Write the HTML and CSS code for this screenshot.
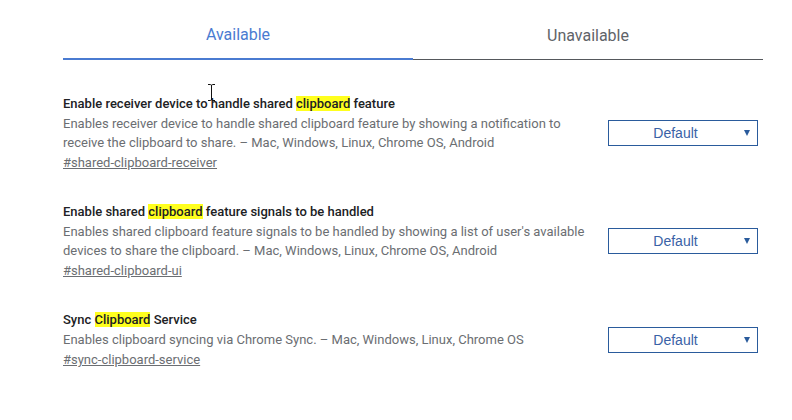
FILE: index.html
```html
<!DOCTYPE html>
<html lang="en">
<head>
<meta charset="utf-8">
<title>Flags</title>
<link rel="stylesheet" href="styles.css">
</head>
<body>
<div class="page">
  <div class="tabs">
    <div class="tab tab-active">Available</div>
    <div class="tab">Unavailable</div>
  </div>

  <div class="list">
    <div class="row">
      <div class="info">
        <h3 class="name">Enable receiver device to handle shared <mark class="hl">clipboard</mark> feature</h3>
        <p class="desc">Enables receiver device to handle shared clipboard feature by showing a notification to receive the clipboard to share. – Mac, Windows, Linux, Chrome OS, Android</p>
        <a class="link" href="#shared-clipboard-receiver">#shared-clipboard-receiver</a>
      </div>
      <div class="select"><span class="select-text">Default</span><span class="arrow"></span></div>
    </div>

    <div class="row">
      <div class="info">
        <h3 class="name">Enable shared <mark class="hl">clipboard</mark> feature signals to be handled</h3>
        <p class="desc">Enables shared clipboard feature signals to be handled by showing a list of user's available devices to share the clipboard. – Mac, Windows, Linux, Chrome OS, Android</p>
        <a class="link" href="#shared-clipboard-ui">#shared-clipboard-ui</a>
      </div>
      <div class="select"><span class="select-text">Default</span><span class="arrow"></span></div>
    </div>

    <div class="row row-last">
      <div class="info">
        <h3 class="name">Sync <mark class="hl">Clipboard</mark> Service</h3>
        <p class="desc">Enables clipboard syncing via Chrome Sync. – Mac, Windows, Linux, Chrome OS</p>
        <a class="link" href="#sync-clipboard-service">#sync-clipboard-service</a>
      </div>
      <div class="select"><span class="select-text">Default</span><span class="arrow"></span></div>
    </div>
  </div>

  <svg class="cursor" width="9" height="17" viewBox="0 0 9 17" aria-hidden="true">
    <path d="M1 0.5H3.5M5.5 0.5H8M3.5 0.5Q4.5 0.5 4.5 2V15Q4.5 16.5 3.5 16.5M5.5 0.5Q4.5 0.5 4.5 2M4.5 15Q4.5 16.5 5.5 16.5M1 16.5H3.5M5.5 16.5H8" fill="none" stroke="#111" stroke-width="1"/>
  </svg>
</div>
</body>
</html>
```

FILE: styles.css
```css
html, body {
  margin: 0;
  padding: 0;
  background: #ffffff;
}

body {
  font-family: Roboto, "Liberation Sans", Arial, sans-serif;
  color: #202124;
}

.page {
  position: relative;
  width: 700px;
  margin-left: 63px;
}

.tabs {
  display: flex;
}

.tab {
  flex: 1;
  text-align: center;
  font-size: 16px;
  line-height: 20px;
  padding-top: 25px;
  padding-bottom: 13px;
  color: #5f6368;
  border-bottom: 1px solid #55585c;
  margin-top: 1px;
}

.tab-active {
  color: #4a7bd1;
  border-bottom: 2px solid #4a7bd1;
  margin-top: 0;
}

.list {
  padding-top: 34px;
}

.row {
  display: flex;
  align-items: center;
  margin-bottom: 30px;
}

.row-last {
  margin-top: 1px;
}

.info {
  flex: 1;
  padding-right: 14px;
}

.name {
  margin: 0;
  font-size: 13px;
  line-height: 19px;
  font-weight: 500;
  color: #202124;
}

.hl {
  background: #ffff1e;
  color: #202124;
  padding: 0;
}

.desc {
  margin: 1px 0 0;
  font-size: 13px;
  line-height: 19px;
  color: #6b6e72;
}

.link {
  display: inline-block;
  font-size: 13px;
  line-height: 19px;
  color: #6b6e72;
  text-decoration: underline;
}

.select {
  flex: none;
  box-sizing: border-box;
  width: 150px;
  height: 26px;
  margin-right: 5px;
  border: 1px solid #2a5b9c;
  display: flex;
  align-items: center;
  font-family: "Liberation Sans", Arial, sans-serif;
  font-size: 14px;
  color: #3a62a6;
}

.select-text {
  flex: 1;
  text-align: center;
  padding-left: 2px;
}

.arrow {
  width: 0;
  height: 0;
  border-left: 3.5px solid transparent;
  border-right: 3.5px solid transparent;
  border-top: 6px solid #2a5b9c;
  margin-right: 7px;
  margin-left: 4px;
}

.cursor {
  position: absolute;
  left: 144px;
  top: 84px;
}
```
